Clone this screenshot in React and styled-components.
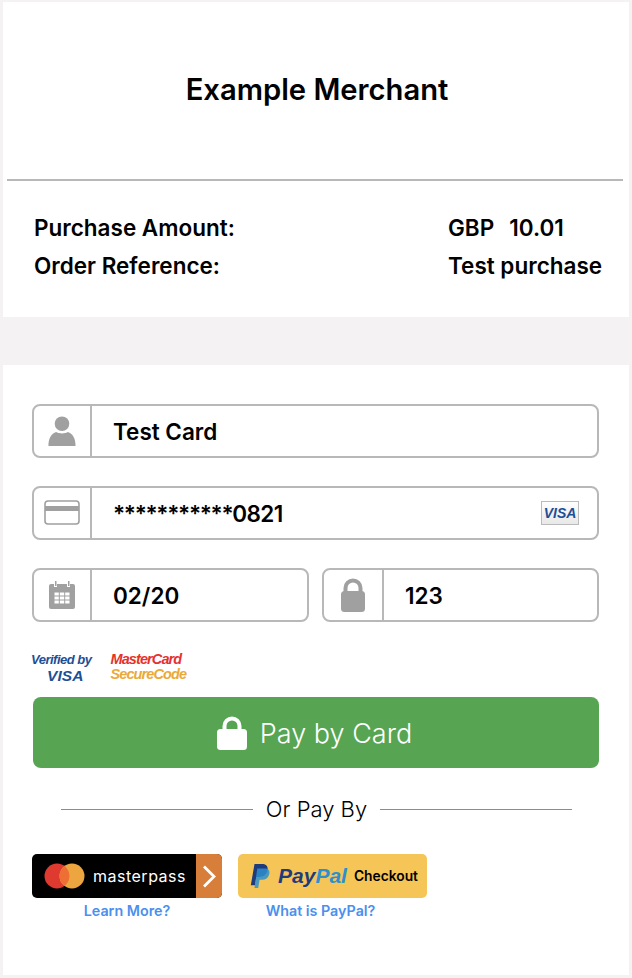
import React from "react";
import styled, { createGlobalStyle } from "styled-components";

const bodyFont = `Inter, "Noto Sans", sans-serif`;
const grey = "#a0a0a0";
const line = "#b8b8b8";

const Global = createGlobalStyle`
  html, body { margin: 0; padding: 0; background: #f4f2f3; }
  body { font-family: ${bodyFont}; color: #000; }
  * { box-sizing: border-box; }
`;

const Page = styled.div`
  width: 632px;
  height: 978px;
  padding: 2px 3px 3px;
  display: flex;
  flex-direction: column;
  gap: 48px;
`;

const Panel = styled.section`
  background: #fff;
`;

const MerchantPanel = styled(Panel)`
  height: 315px;
  display: flex;
  flex-direction: column;
`;

const Header = styled.header`
  height: 179px;
  margin: 0 6px 0 4px;
  border-bottom: 2px solid ${line};
  display: flex;
  justify-content: center;
  padding: 70px 0 0 4px;
`;

const Title = styled.h1`
  margin: 0;
  font-size: 29.2px;
  line-height: 36px;
  font-weight: 600;
`;

const Summary = styled.div`
  padding: 32px 0 0 31px;
  display: grid;
  grid-template-columns: 414px 1fr;
  row-gap: 8px;
  font-size: 22.5px;
  line-height: 30px;
  font-weight: 600;
`;

const Amount = styled.span`
  display: flex;
  gap: 15px;
`;

const PaymentPanel = styled(Panel)`
  flex: 1;
  padding: 39px 30px 0 29px;
  display: flex;
  flex-direction: column;
`;

const Fields = styled.div`
  display: grid;
  grid-template-columns: 1fr 1fr;
  column-gap: 13px;
  row-gap: 28px;
`;

const Field = styled.div`
  grid-column: ${(p) => (p.$wide ? "1 / -1" : "auto")};
  height: 54px;
  border: 2px solid ${line};
  border-radius: 8px;
  display: flex;
  align-items: stretch;
`;

const IconCell = styled.div`
  width: ${(p) => p.$width || 58}px;
  flex: none;
  border-right: 2px solid ${line};
  display: flex;
  align-items: center;
  justify-content: center;
`;

const Value = styled.div`
  flex: 1;
  padding: 0 18px 0 21px;
  display: flex;
  align-items: center;
  justify-content: space-between;
  font-size: 22.5px;
  font-weight: 600;
`;

const Masked = styled.span`
  letter-spacing: -1.3px;
`;

const Digits = styled.span`
  letter-spacing: -0.6px;
`;

const VisaChip = styled.span`
  width: 38px;
  height: 24px;
  border: 1px solid #bbb;
  background: linear-gradient(#fff, #e8e8e8);
  color: #1d4f95;
  font: italic 700 14px/22px "Liberation Sans", sans-serif;
  text-align: center;
`;

const Badges = styled.div`
  height: 30px;
  margin-top: 30px;
  display: flex;
  gap: 19px;
  font-family: "Liberation Sans", sans-serif;
  font-style: italic;
  font-weight: 700;
`;

const BadgeVisa = styled.div`
  color: #1d4f95;
  font-size: 13px;
  line-height: 15px;
  text-align: center;
  letter-spacing: -0.5px;
  margin-left: -1px;

  strong {
    display: block;
    margin-left: 8px;
    font-size: 15.5px;
    line-height: 18px;
    letter-spacing: 0.1px;
  }
`;

const BadgeMc = styled.div`
  color: #e5322d;
  font-size: 14.5px;
  line-height: 15px;
  letter-spacing: -0.9px;

  span {
    display: block;
    color: #eaa93b;
  }
`;

const PayButton = styled.button`
  height: 71px;
  margin: 15px 0 0 1px;
  padding: 1px 3px 0 0;
  border: 0;
  border-radius: 8px;
  background: #57a553;
  color: #fff;
  display: flex;
  align-items: center;
  justify-content: center;
  gap: 13px;
  font-family: ${bodyFont};
  font-size: 27px;
  font-weight: 300;
`;

const Divider = styled.div`
  margin: 27px 27px 0 29px;
  height: 28px;
  display: flex;
  align-items: center;
  gap: 13px;
  font-size: 22px;
  font-weight: 300;

  &::before,
  &::after {
    content: "";
    flex: 1;
    height: 1px;
    background: #8c8c8c;
  }
`;

const Wallets = styled.div`
  margin-top: 31px;
  display: flex;
  gap: 16px;
`;

const Wallet = styled.div`
  width: ${(p) => p.$width}px;
  display: flex;
  flex-direction: column;
  align-items: center;
`;

const WalletButton = styled.div`
  width: 100%;
  height: 44px;
  border-radius: 5px;
  overflow: hidden;
  display: flex;
  align-items: center;
  background: ${(p) => p.$bg};
`;

const MasterpassText = styled.span`
  flex: 1;
  color: #fff;
  font-size: 16px;
  font-weight: 400;
  letter-spacing: 0.5px;
  margin-left: 8px;
`;

const Arrow = styled.span`
  width: 26px;
  align-self: stretch;
  background: #d77e3a;
  display: flex;
  align-items: center;
  justify-content: center;
`;

const PayPalWord = styled.span`
  margin-left: 7px;
  font: italic 700 21px "Liberation Sans", sans-serif;
  color: #1f3b7c;

  em {
    color: #2d8fd0;
  }
`;

const Checkout = styled.span`
  margin-left: 7px;
  font-size: 13.8px;
  font-weight: 600;
`;

const HelpLink = styled.a`
  margin-top: 4px;
  color: #4a90ee;
  font-size: 14.3px;
  line-height: 17px;
  font-weight: 600;
  margin-left: ${(p) => p.$shift || 0}px;
`;

const PersonIcon = () => (
  <svg width="28" height="31" viewBox="0 0 28 32" fill={grey}>
    <circle cx="14" cy="8" r="7.5" />
    <path d="M0 31c0-8 3-13 8-14.500 3.500 2 8.500 2 12 0 5 1.500 8 6.500 8 14.500z" />
  </svg>
);

const CardIcon = () => (
  <svg width="36" height="26" viewBox="0 0 36 26" fill="none">
    <rect x="1" y="1" width="34" height="23" rx="3" stroke={grey} strokeWidth="1.600" />
    <rect x="1" y="6" width="34" height="5" fill={grey} />
  </svg>
);

const CalendarIcon = () => (
  <svg width="26" height="28" viewBox="0 0 26 28" fill={grey}>
    <path d="M2 3h3v3h3V3h10v3h3V3h3a2 2 0 0 1 2 2v21a2 2 0 0 1-2 2H2a2 2 0 0 1-2-2V5a2 2 0 0 1 2-2z" />
    <rect x="6" y="0" width="1.500" height="5" />
    <rect x="19" y="0" width="1.500" height="5" />
    <path
      d="M5 11h16v12H5zM10.300 11v12M15.700 11v12M5 15h16M5 19h16"
      fill="#fff"
      stroke={grey}
      strokeWidth="1"
    />
  </svg>
);

const PadlockIcon = ({ color = grey, width = 24, height = 34 }) => (
  <svg width={width} height={height} viewBox={`0 0 ${width} ${height}`} fill="none">
    <path
      d={`M${width / 2 - 7.5} 16V10a7.500 7.500 0 0 1 15 0v6`}
      stroke={color}
      strokeWidth="4"
    />
    <rect x="0" y="13" width={width} height={height - 13} rx="3.500" fill={color} />
  </svg>
);

const McCircles = () => (
  <svg width="41" height="26" viewBox="0 0 41 26" style={{ marginLeft: 12 }}>
    <circle cx="13" cy="13" r="12.500" fill="#df3a2f" />
    <circle cx="28" cy="13" r="12.500" fill="#eda540" />
    <path d="M20.500 3a12.500 12.500 0 0 1 0 20 12.500 12.500 0 0 1 0-20z" fill="#ee6f33" />
  </svg>
);

const ChevronIcon = () => (
  <svg width="14" height="23" viewBox="0 0 14 23" fill="none">
    <path d="M2 1.500l10 10-10 10" stroke="#fff" strokeWidth="2.800" />
  </svg>
);

const PayPalMark = () => (
  <svg width="21" height="24" viewBox="0 0 21 26" style={{ marginLeft: 12 }}>
    <path d="M4 0h8c5 0 7 3 6 7-1 5-5 7-9 7H6l-1.500 9H0z" fill="#1f3b7c" />
    <path d="M7 5h8c4 0 6 2 5 6-1 4-4 6-8 6H9.500L8 26H4z" fill="#2d8fd0" opacity="0.85" />
  </svg>
);

export default function App() {
  return (
    <>
      <Global />
      <Page>
        <MerchantPanel>
          <Header>
            <Title>Example Merchant</Title>
          </Header>
          <Summary>
            <span>Purchase Amount:</span>
            <Amount>
              <span>GBP</span>
              <span>10.01</span>
            </Amount>
            <span>Order Reference:</span>
            <span>Test purchase</span>
          </Summary>
        </MerchantPanel>

        <PaymentPanel>
          <Fields>
            <Field $wide>
              <IconCell>
                <PersonIcon />
              </IconCell>
              <Value>Test Card</Value>
            </Field>
            <Field $wide>
              <IconCell>
                <CardIcon />
              </IconCell>
              <Value>
                <span>
                  <Masked>***********</Masked>
                  <Digits>0821</Digits>
                </span>
                <VisaChip>VISA</VisaChip>
              </Value>
            </Field>
            <Field>
              <IconCell>
                <CalendarIcon />
              </IconCell>
              <Value>02/20</Value>
            </Field>
            <Field>
              <IconCell $width={60}>
                <PadlockIcon />
              </IconCell>
              <Value>123</Value>
            </Field>
          </Fields>

          <Badges>
            <BadgeVisa>
              Verified by
              <strong>VISA</strong>
            </BadgeVisa>
            <BadgeMc>
              MasterCard
              <span>SecureCode</span>
            </BadgeMc>
          </Badges>

          <PayButton>
            <PadlockIcon color="#fff" width={30} height={34} />
            Pay by Card
          </PayButton>

          <Divider>Or Pay By</Divider>

          <Wallets>
            <Wallet $width={190}>
              <WalletButton $bg="#000">
                <McCircles />
                <MasterpassText>masterpass</MasterpassText>
                <Arrow>
                  <ChevronIcon />
                </Arrow>
              </WalletButton>
              <HelpLink>Learn More?</HelpLink>
            </Wallet>
            <Wallet $width={189}>
              <WalletButton $bg="#f6c557">
                <PayPalMark />
                <PayPalWord>
                  Pay<em>Pal</em>
                </PayPalWord>
                <Checkout>Checkout</Checkout>
              </WalletButton>
              <HelpLink $shift={-24}>What is PayPal?</HelpLink>
            </Wallet>
          </Wallets>
        </PaymentPanel>
      </Page>
    </>
  );
}
